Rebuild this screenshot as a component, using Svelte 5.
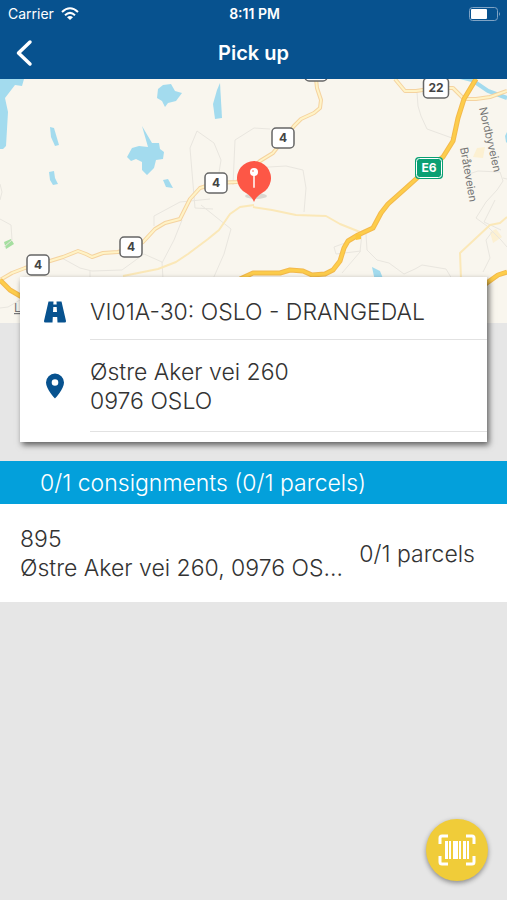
<script lang="ts">
	interface Shield {
		x: number;
		y: number;
		label: string;
	}

	interface Consignment {
		id: string;
		address: string;
		parcels: string;
	}

	const route = 'VI01A-30: OSLO - DRANGEDAL';
	const address = ['Østre Aker vei 260', '0976 OSLO'];

	const shields: Shield[] = [
		{ x: 316, y: 71, label: '' },
		{ x: 283, y: 138, label: '4' },
		{ x: 216, y: 183, label: '4' },
		{ x: 131, y: 247, label: '4' },
		{ x: 38, y: 265, label: '4' },
		{ x: 436, y: 88, label: '22' }
	];

	const lakes = [
		'M0 79H24L22 86L15 85L5 98L8 112L6 146L3 149H0Z',
		'M158 89L163 85L171 84L175 91L182 93L176 101L168 103L165 107L162 101L157 98Z',
		'M220 83L222 118L215 119L213 104L217 90Z',
		'M50 127L54 128L59 145L55 146L51 137Z',
		'M49 172L54 171L55 178L58 184L53 185L50 180Z',
		'M142 126L152 143L159 143L160 149L164 152L163 159L156 160L154 168L147 175L142 170L142 162L136 159L131 161L127 157L132 148L139 146L148 147Z',
		'M163 180L168 179L173 188L166 187Z',
		'M372 267L380 271L384 281L375 281Z',
		'M507 132L505 136L506 142L507 143Z'
	];

	const lanes = [
		'M0 250M0 219L11 225L12 240L4 247',
		'M213 209L195 208L190 148L197 131L214 143L221 160L217 185',
		'M233 185L235 140L254 128L270 129',
		'M252 168L286 166L303 170L306 188L304 212',
		'M417 92L418 106L421 116L427 129L452 138',
		'M60 257L80 268L92 271L122 270L144 254L162 262L163 279',
		'M182 220L174 240L162 263',
		'M154 226V216L180 202L210 199',
		'M201 205L231 229L224 254L213 279',
		'M345 243L334 247L336 254L361 251',
		'M362 233L360 252L342 273',
		'M366 234L367 250L377 260L389 263L404 274L415 269L422 265L446 269L452 279',
		'M466 175L478 171L500 172L503 181L497 190L486 202L476 218L487 226L501 240L507 247',
		'M503 178L507 179M495 200L484 222L501 230',
		'M492 232L486 240L490 258L483 272',
		'M0 308L8 307L20 300M0 184L2 192L0 200M90 271V277'
	];

	const minorRoads = [
		'M254 205L240 207L230 214L219 230L208 239L188 254L176 262L158 269L123 276',
		'M253 207L272 210L296 215L326 216L340 224L360 232',
		'M507 217L500 223L490 225L460 253L461 279'
	];

	const roads = [
		'M316 79L317 88L321 100L320 108L314 113L301 119L294 126L273 153L260 161L237 182L216 183L200 188L190 199L180 219L165 223L155 229L143 242L131 248L118 252L103 253L92 257L86 254L78 251L63 257L50 261L25 268L12 273L0 280',
		'M395 79L405 91L416 91L436 88L453 88L464 99L476 99L490 97L507 91'
	];

	const motorways = [
		'M476 79L464 99L458 118L453 141L443 157L426 170L406 188L388 204L381 213L373 228L358 235L348 241L344 248L340 261L333 270L325 274L312 275L303 271L290 270L280 273L253 273L240 279',
		'M0 280L10 290L22 297',
		'M484 285L498 275L507 272'
	];

	const consignments: Consignment[] = [
		{ id: '895', address: 'Østre Aker vei 260, 0976 OSLO', parcels: '0/1 parcels' }
	];
</script>

<div class="screen">
	<header>
		<div class="status">
			<span class="carrier">
				Carrier
				<svg width="18" height="13" viewBox="0 0 18 13" aria-hidden="true">
					<g fill="none" stroke="#fff" stroke-width="2">
						<path d="M1 5Q9 -2.5 17 5" />
						<path d="M4 8.2Q9 3.6 14 8.2" />
					</g>
					<path d="M6 10.2Q9 7.6 12 10.2L9 13Z" fill="#fff" />
				</svg>
			</span>
			<span class="time">8:11 PM</span>
			<svg class="battery" width="32" height="14" viewBox="0 0 32 14" aria-hidden="true">
				<rect x="0.5" y="0.5" width="28" height="13" rx="3" fill="none" stroke="#7fa3c4" />
				<rect x="2" y="2" width="16" height="10" rx="1" fill="#fff" />
				<path d="M30 5Q32 7 30 9Z" fill="#7fa3c4" />
			</svg>
		</div>
		<nav>
			<button type="button" class="back" aria-label="Back">
				<svg width="18" height="28" viewBox="0 0 18 28">
					<path d="M15 3L3.500 14L15 25" fill="none" stroke="#fff" stroke-width="3.500" stroke-linecap="round" stroke-linejoin="round" />
				</svg>
			</button>
			<h1>Pick up</h1>
		</nav>
	</header>

	<svg class="map" viewBox="0 79 507 244" preserveAspectRatio="xMidYMid slice" role="img" aria-label="Map of the pick up address">
		<rect y="79" width="507" height="244" fill="#f9f6ee" />
		<path d="M477 148L485 147L483 158L473 157ZM490 232L496 229L502 237L493 243Z" fill="#fcf0d2" />
		<path d="M4 242L11 239L14 244L6 249Z" fill="#a5dfa0" />
		{#each lakes as d}
			<path {d} fill="#a3dbee" />
		{/each}
		<path d="M456 76L472 80L488 91L507 98" class="river" />
		{#each lanes as d}
			<path {d} class="lane" />
		{/each}
		{#each minorRoads as d}
			<path {d} class="minor" />
		{/each}
		{#each roads as d}
			<path {d} class="road-edge" />
			<path {d} class="road" />
		{/each}
		{#each motorways as d}
			<path {d} class="motorway-edge" />
			<path {d} class="motorway" />
		{/each}
		<path d="M355 234L361 234L361 239L356 240Z" fill="#fcc83d" />

		<text class="street" transform="translate(479 108) rotate(77)">Nordbyveien</text>
		<text class="street" transform="translate(460 148) rotate(80)">Bråteveien</text>
		<text class="place" x="14" y="312">L</text>

		{#each shields as shield}
			{@const w = shield.label.length > 1 ? 25 : 22}
			<rect x={shield.x - w / 2} y={shield.y - 10} width={w} height="20" rx="4" class="shield" />
			{#if shield.label}
				<text x={shield.x} y={shield.y + 4} class="shield-label">{shield.label}</text>
			{/if}
		{/each}
		<rect x="415" y="157" width="28" height="22" rx="4" fill="#0aa073" />
		<rect x="416.500" y="158.500" width="25" height="19" rx="3" fill="none" stroke="#fff" />
		<text x="429" y="172" class="shield-label euro">E6</text>

		<ellipse cx="256" cy="196" rx="11" ry="3" fill="#000" opacity="0.12" />
		<path d="M254 202C252 197 249 195 246 193A17 17 0 1 1 262 193C259 195 256 197 254 202Z" fill="#fd5746" />
		<path d="M254 174V187" stroke="#ffd5cf" stroke-width="2" stroke-linecap="round" />
		<circle cx="254" cy="172" r="4" fill="#fff" />
		<circle cx="253" cy="171" r="1" fill="#fd9a8e" />
	</svg>

	<section class="card">
		<div class="detail">
			<svg width="24" height="22" viewBox="0 0 24 22" aria-hidden="true">
				<path d="M5.500 0.500H10.500L10.300 3.500H13.700L13.500 0.500H18.500L23 20Q23.300 21.500 21.500 21.500H14.500L14.200 16H9.800L9.500 21.500H2.500Q0.700 21.500 1 20ZM10.300 6L10 11H14L13.700 6Z" fill="#07528f" fill-rule="evenodd" />
			</svg>
			<p>{route}</p>
		</div>
		<div class="detail">
			<svg width="24" height="26" viewBox="0 0 24 26" aria-hidden="true">
				<path d="M12 0.500A9 9 0 0 0 3 9.500C3 16 12 25.500 12 25.500S21 16 21 9.500A9 9 0 0 0 12 0.500ZM12 6.200A3.300 3.300 0 1 1 12 12.800A3.300 3.300 0 1 1 12 6.200Z" fill="#07528f" />
			</svg>
			<p class="address">
				{#each address as line}
					<span>{line}</span>
				{/each}
			</p>
		</div>
	</section>

	<h2>0/1 consignments (0/1 parcels)</h2>

	<ul>
		{#each consignments as item}
			<li>
				<div class="info">
					<span>{item.id}</span>
					<span class="where">{item.address}</span>
				</div>
				<span class="parcels">{item.parcels}</span>
			</li>
		{/each}
	</ul>

	<button type="button" class="scan" aria-label="Scan barcode">
		<svg width="38" height="32" viewBox="0 0 38 32">
			<path d="M2 10V4Q2 2 4 2H10M28 2H34Q36 2 36 4V10M36 22V28Q36 30 34 30H28M10 30H4Q2 30 2 28V22" fill="none" stroke="#fff" stroke-width="3" />
			<path d="M7 7H10V25H7ZM11 7H13V25H11ZM15 7H20V25H15ZM21 7H23V25H21ZM25 7H28V25H25ZM29 7H31V25H29Z" fill="#fff" />
		</svg>
	</button>
</div>

<style>
	:global(body) {
		margin: 0;
		background: #e6e6e6;
	}

	.screen {
		min-height: 100vh;
		background: #e6e6e6;
		color: #333;
		font-family: Inter, 'Liberation Sans', sans-serif;
		font-size: 23px;
		font-weight: 300;
		line-height: 29px;
	}

	header {
		background: #07528f;
		color: #fff;
	}

	.status {
		display: grid;
		grid-template-columns: 1fr auto 1fr;
		align-items: center;
		height: 27px;
		padding: 0 6px 0 8px;
		font-size: 14px;
		line-height: 16px;
	}

	.carrier {
		display: flex;
		align-items: center;
		gap: 7px;
		font-weight: 400;
	}

	.time {
		font-weight: 600;
	}

	.battery {
		justify-self: end;
	}

	nav {
		display: grid;
		grid-template-columns: 48px 1fr 48px;
		align-items: center;
		height: 52px;
	}

	button {
		display: flex;
		align-items: center;
		justify-content: center;
		padding: 0;
		border: none;
		cursor: pointer;
	}

	.back {
		height: 48px;
		background: none;
	}

	h1 {
		margin: 0;
		font-size: 20px;
		font-weight: 600;
		line-height: 24px;
		text-align: center;
	}

	.map {
		display: block;
		width: 100%;
		height: 244px;
	}

	.river {
		fill: none;
		stroke: #a3dbee;
		stroke-width: 4;
	}

	.lane {
		fill: none;
		stroke: #e9e6df;
		stroke-width: 1;
	}

	.minor {
		fill: none;
		stroke: #fbe8b8;
		stroke-width: 2;
		stroke-linejoin: round;
	}

	.road-edge,
	.road,
	.motorway-edge,
	.motorway {
		fill: none;
		stroke-linejoin: round;
	}

	.road-edge {
		stroke: #f5d3a0;
		stroke-width: 4;
	}

	.road {
		stroke: #fff3c6;
		stroke-width: 2;
	}

	.motorway-edge {
		stroke: #f3b94c;
		stroke-width: 5;
	}

	.motorway {
		stroke: #fdcd4b;
		stroke-width: 3;
	}

	.street {
		fill: #777;
		font-size: 11px;
		font-weight: 400;
	}

	.place {
		fill: #777;
		font-size: 12px;
		font-weight: 400;
		text-decoration: underline;
	}

	.shield {
		fill: #fff;
		stroke: #666;
		stroke-width: 1.5;
	}

	.shield-label {
		fill: #444;
		font-size: 12px;
		font-weight: 700;
		text-anchor: middle;
	}

	.euro {
		fill: #fff;
	}

	.card {
		position: relative;
		margin: -46px 20px 19px;
		padding-bottom: 10px;
		background: #fff;
		box-shadow: 2px 3px 6px rgba(0, 0, 0, 0.6);
	}

	.detail {
		display: grid;
		grid-template-columns: 70px 1fr;
		align-items: center;
		padding-top: 6px;
	}

	.detail svg {
		justify-self: center;
	}

	.detail p {
		margin: 0;
		padding: 15px 0 12px;
		border-bottom: 1px solid #e2e2e2;
	}

	.detail .address {
		display: flex;
		flex-direction: column;
		padding-bottom: 12px;
	}

	.detail:last-child {
		padding-top: 0;
	}

	.detail:last-child p {
		padding: 18px 0 15px;
	}

	h2 {
		margin: 0;
		padding: 8px 40px 6px;
		background: #03a0db;
		color: #fff;
		font-size: 23px;
		font-weight: 300;
		line-height: 29px;
	}

	ul {
		margin: 0;
		padding: 0;
		list-style: none;
	}

	li {
		display: flex;
		align-items: center;
		gap: 12px;
		padding: 21px 32px 19px 20px;
		background: #fff;
	}

	.info {
		display: flex;
		flex: 1;
		flex-direction: column;
		min-width: 0;
	}

	.where {
		overflow: hidden;
		text-overflow: ellipsis;
		white-space: nowrap;
	}

	.parcels {
		white-space: nowrap;
	}

	.scan {
		position: fixed;
		right: 19px;
		bottom: 19px;
		width: 62px;
		height: 62px;
		border-radius: 50%;
		background: #f0cc39;
		box-shadow: 0 2px 5px rgba(0, 0, 0, 0.4);
	}
</style>
